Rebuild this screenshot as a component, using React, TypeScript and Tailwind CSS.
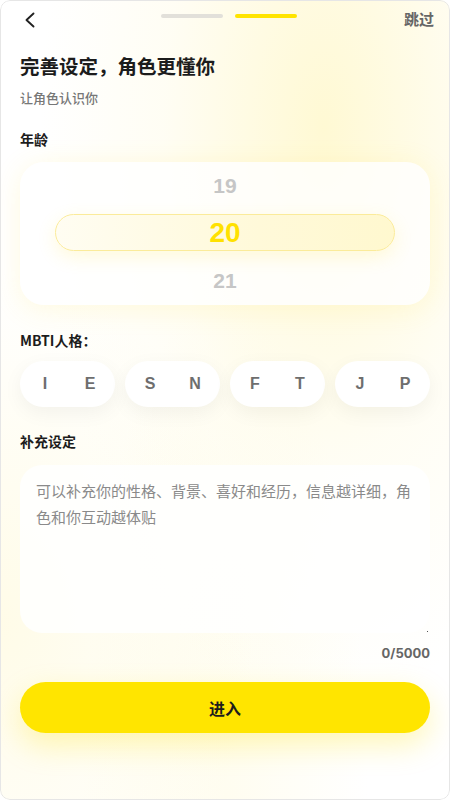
import React from "react";

const cjk = "font-['Noto_Sans_CJK_SC','Noto_Sans',sans-serif]";
const num = "font-['Liberation_Sans',Arial,sans-serif]";

export default function App() {
  const mbti: [string, string][] = [
    ["I", "E"],
    ["S", "N"],
    ["F", "T"],
    ["J", "P"],
  ];
  return (
    <div className={`relative w-[450px] h-[800px] overflow-hidden rounded-[10px] bg-white ${cjk}`}>
      <div className="w-full h-full bg-[radial-gradient(ellipse_at_72%_16%,rgba(255,236,120,0.32)_0%,rgba(255,244,180,0.15)_35%,rgba(255,255,255,0)_62%),radial-gradient(ellipse_at_0%_78%,rgba(255,240,150,0.22)_0%,rgba(255,255,255,0)_40%),radial-gradient(ellipse_at_50%_100%,rgba(255,245,180,0.2)_0%,rgba(255,255,255,0)_45%)] flex flex-col">
        {/* header */}
        <div className="h-10 grid grid-cols-[1fr_auto_1fr] items-center pl-[24px] pr-[16px]">
          <div className="flex items-center">
            <svg width="12" height="16" viewBox="0 0 12 16" fill="none">
              <path d="M9.5 1.5 L2.5 8 L9.5 14.5" stroke="#222" strokeWidth="1.9" strokeLinecap="round" strokeLinejoin="round" />
            </svg>
          </div>
          <div className="flex items-center gap-3 -mt-[9px]">
            <div className="w-[62px] h-1 rounded-full bg-[#e2e0da]" />
            <div className="w-[62px] h-1 rounded-full bg-[#ffe400]" />
          </div>
          <div className="flex justify-end">
            <span className="text-[15px] font-bold text-[#666] leading-5 -mt-[2px]">跳过</span>
          </div>
        </div>

        <div className="px-5 flex flex-col">
          <h1 className="mt-3 text-[19.5px] leading-7 font-bold text-[#1c1c1c]">完善设定，角色更懂你</h1>
          <p className="mt-2 text-[13px] leading-5 font-medium text-[#777]">让角色认识你</p>

          <div className="mt-[21px] text-[14px] leading-5 font-bold text-[#1c1c1c]">年龄</div>

          {/* picker */}
          <div className="mt-[13px] h-[143px] rounded-[24px] bg-white/80 shadow-[0_4px_28px_rgba(255,226,60,0.16)] flex flex-col">
            <div className={`h-12 flex items-center justify-center text-[21px] font-bold text-[#c6c6c6] ${num}`}>19</div>
            <div className="mt-1 mx-[35px] h-[37px] rounded-full border border-[#fbeb9a] bg-[linear-gradient(90deg,#fffdf2_0%,#fff9d9_60%,#fff8cf_100%)] shadow-[0_6px_18px_rgba(255,226,60,0.18)] flex items-center justify-center">
              <span className={`text-[28px] leading-none font-bold text-[#ffe100] ${num}`}>20</span>
            </div>
            <div className={`mt-[6px] h-12 flex items-center justify-center text-[21px] font-bold text-[#c6c6c6] ${num}`}>21</div>
          </div>

          <div className="mt-[25px] text-[14px] leading-5 font-bold text-[#1c1c1c]">MBTI人格：</div>

          <div className="mt-[11px] grid grid-cols-4 gap-[10px]">
            {mbti.map(([a, b]) => (
              <div key={a} className="h-[46px] rounded-full bg-white shadow-[0_6px_20px_rgba(0,0,0,0.05)] flex items-center justify-center gap-[25px]">
                <span className={`w-5 text-center text-[16px] font-bold text-[#6e6e6e] ${num}`}>{a}</span>
                <span className={`w-5 text-center text-[16px] font-bold text-[#6e6e6e] ${num}`}>{b}</span>
              </div>
            ))}
          </div>

          <div className="mt-[24px] text-[14px] leading-5 font-bold text-[#1c1c1c]">补充设定</div>

          <div className="mt-[14px] h-[168px] rounded-[22px] bg-white/85 px-4 pt-[13px] relative">
            <p className="text-[15px] leading-[26px] text-[#8a8a8a]">
              可以补充你的性格、背景、喜好和经历，信息越详细，角色和你互动越体贴
            </p>
            <div className="absolute right-[2px] bottom-[1px] w-[1px] h-[1px] bg-[#555]" />
          </div>

          <div className="mt-[11px] text-right text-[13px] leading-[18px] font-bold text-[#666] font-['Inter',sans-serif]">0/5000</div>

          <button className="mt-5 h-[51px] rounded-full bg-[#ffe500] shadow-[0_12px_30px_rgba(255,225,0,0.28)] flex items-center justify-center">
            <span className="text-[16px] font-bold text-[#1c1c1c]">进入</span>
          </button>
        </div>
      </div>
      <div className="pointer-events-none absolute inset-0 rounded-[10px] border border-[#e6e6e6]" />
    </div>
  );
}
